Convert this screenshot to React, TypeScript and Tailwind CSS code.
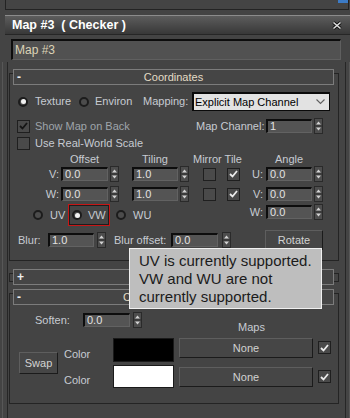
import React from 'react';

const font = "font-['Liberation_Sans',Arial,sans-serif]";

function Spinner() {
  return (
    <svg width="9" height="16" viewBox="0 0 9 16" className="shrink-0">
      <rect x="0.5" y="0.5" width="8" height="15" fill="#4d4d4d" stroke="#2a2a2a" />
      <path d="M2 6.5 L4.5 3.5 L7 6.5Z" fill="#d2d2d2" />
      <line x1="1" y1="8" x2="8" y2="8" stroke="#2a2a2a" />
      <path d="M2 9.5 L4.5 12.5 L7 9.5Z" fill="#d2d2d2" />
    </svg>
  );
}

function NumField({ value, className }: { value: string; className: string }) {
  return (
    <div
      className={`h-[14px] shrink-0 bg-[#545454] border-t-2 border-l-2 border-t-[#0d0d0d] border-l-[#0d0d0d] border-b border-r border-b-[#626262] border-r-[#626262] pl-[2px] flex items-center text-[11px] leading-none text-[#e2e2e2] ${className}`}
    >
      {value}
    </div>
  );
}

function Check({ checked, dim }: { checked?: boolean; dim?: boolean }) {
  return (
    <div className="w-[13px] h-[13px] shrink-0 border border-[#1f1f1f] bg-[#4a4a4a] flex items-center justify-center">
      {checked && (
        <svg width="9" height="8" viewBox="0 0 9 8">
          <path d="M1 4 L3.5 6.5 L8 1" fill="none" stroke={dim ? '#151515' : '#ececec'} strokeWidth="1.8" />
        </svg>
      )}
    </div>
  );
}

function Radio({ on }: { on?: boolean }) {
  return (
    <div className="w-[10px] h-[10px] shrink-0 rounded-full border-2 border-[#1c1c1c] bg-[#4c4c4c] flex items-center justify-center">
      {on && <div className="w-[5px] h-[5px] rounded-full bg-[#f2f2f2]" />}
    </div>
  );
}

function Header({ sign, title }: { sign: string; title?: string }) {
  return (
    <div className="-mt-[5px] ml-[3px] w-[321px] h-[16px] shrink-0 border border-[#7c7c7c] bg-[#454545] grid grid-cols-[20px_1fr_20px] items-center">
      <span className="pl-[3px] text-[12px] font-bold text-[#eeeeee] leading-none">{sign}</span>
      <span className="text-center text-[11px] text-[#e3dcc6] leading-none">{title}</span>
      <span />
    </div>
  );
}

function Btn({ label, className }: { label: string; className: string }) {
  return (
    <div
      className={`shrink-0 bg-[#464646] border-t border-l border-t-[#5e5e5e] border-l-[#5e5e5e] border-b border-r border-b-[#1b1b1b] border-r-[#1b1b1b] flex items-center justify-center text-[11px] text-[#d2d2d2] ${className}`}
    >
      {label}
    </div>
  );
}

export default function App() {
  return (
    <div className={`relative w-[350px] h-[418px] overflow-hidden bg-[#444444] ${font} text-[11px] text-[#c7cbd2]`}>
      {/* top strip */}
      <div className="ml-[5px] w-[344px] h-[10px] border-l border-r border-b border-[#232323] flex justify-end">
        <div className="w-[10px] h-[3px] bg-[#3c7bc6]" />
      </div>

      {/* title bar */}
      <div className="mt-[5px] ml-[5px] h-[20px] border-t border-t-[#8c8c8c] border-b border-b-[#262626] bg-linear-to-b from-[#5d5d5d] to-[#383838] flex items-center justify-between pl-[7px] pr-[8px]">
        <span className="text-[12.5px] font-bold text-white whitespace-pre leading-none">Map #3  ( Checker )</span>
        <svg width="10" height="9" viewBox="0 0 10 9">
          <path d="M1.5 1.5 L8.5 7.5 M8.5 1.5 L1.5 7.5" stroke="#111" strokeWidth="3.4" />
          <path d="M1.5 1.5 L8.5 7.5 M8.5 1.5 L1.5 7.5" stroke="#dedede" strokeWidth="1.6" />
        </svg>
      </div>

      {/* name field */}
      <div className="mt-[4px] ml-[11px] w-[330px] h-[21px] bg-[#515151] border-t-2 border-l-2 border-t-[#0c0c0c] border-l-[#0c0c0c] border-b border-r border-b-[#5f5f5f] border-r-[#5f5f5f] pl-[2px] flex items-center text-[12px] text-[#dcd3b6]">
        Map #3
      </div>

      {/* rollouts */}
      <div className="mt-[2px] ml-[2px] w-[348px] h-[356px] border-l border-r border-[#575757]">
        <div className="ml-[4px] w-[339px] h-full border-l border-r border-[#262626] flex flex-col">
          {/* Coordinates */}
          <div className="mt-[11px] ml-[1px] w-[330px] border border-[#242424] pb-[10px] flex flex-col">
            <Header sign="-" title="Coordinates" />

            <div className="mt-[7px] h-[19px] flex items-center">
              <div className="ml-[8px]"><Radio on /></div>
              <span className="ml-[7px] w-[44px]">Texture</span>
              <Radio />
              <span className="ml-[6px] w-[48px]">Environ</span>
              <span className="w-[49px]">Mapping:</span>
              <div className="w-[138px] h-[19px] bg-[#e2e2e2] border-t-2 border-l-2 border-[#0a0a0a] border-r border-b flex items-center justify-between pl-[1px] pr-[4px] text-[11px] text-black">
                <span>Explicit Map Channel</span>
                <svg width="9" height="6" viewBox="0 0 9 6">
                  <path d="M0.5 0.5 L4.5 4.5 L8.5 0.5" fill="none" stroke="#606060" strokeWidth="1.1" />
                </svg>
              </div>
            </div>

            <div className="mt-[7px] h-[16px] flex items-center">
              <div className="ml-[7px]"><Check checked dim /></div>
              <span className="ml-[5px] w-[161px] text-[#9fa4ab]">Show Map on Back</span>
              <span className="w-[70px]">Map Channel:</span>
              <NumField value="1" className="w-[46px]" />
              <div className="ml-[2px]"><Spinner /></div>
            </div>

            <div className="mt-[2px] h-[14px] flex items-center">
              <div className="ml-[7px]"><Check /></div>
              <span className="ml-[5px]">Use Real-World Scale</span>
            </div>

            <div className="mt-[2px] h-[14px] flex items-center">
              <span className="w-[51px]" />
              <span className="w-[47px] text-center">Offset</span>
              <span className="ml-[24px] w-[46px] text-center">Tiling</span>
              <span className="ml-[15px] w-[47px] text-center whitespace-nowrap">Mirror Tile</span>
              <span className="ml-[26px] w-[46px] text-center">Angle</span>
            </div>

            <div className="h-[16px] flex items-center">
              <span className="w-[51px] text-right pr-[2px]">V:</span>
              <NumField value="0.0" className="w-[47px]" />
              <div className="ml-[2px]"><Spinner /></div>
              <NumField value="1.0" className="ml-[13px] w-[46px]" />
              <div className="ml-[2px]"><Spinner /></div>
              <div className="ml-[14px]"><Check /></div>
              <div className="ml-[11px]"><Check checked /></div>
              <span className="w-[26px] text-right pr-[3px]">U:</span>
              <NumField value="0.0" className="w-[46px]" />
              <div className="ml-[2px]"><Spinner /></div>
            </div>

            <div className="mt-[4px] h-[16px] flex items-center">
              <span className="w-[51px] text-right pr-[2px]">W:</span>
              <NumField value="0.0" className="w-[47px]" />
              <div className="ml-[2px]"><Spinner /></div>
              <NumField value="1.0" className="ml-[13px] w-[46px]" />
              <div className="ml-[2px]"><Spinner /></div>
              <div className="ml-[14px]"><Check /></div>
              <div className="ml-[11px]"><Check checked /></div>
              <span className="w-[26px] text-right pr-[3px]">V:</span>
              <NumField value="0.0" className="w-[46px]" />
              <div className="ml-[2px]"><Spinner /></div>
            </div>

            <div className="mt-[2px] h-[22px] flex items-start">
              <div className="w-[230px] h-[22px] flex items-center">
                <div className="ml-[23px]"><Radio /></div>
                <span className="ml-[7px] w-[18px]">UV</span>
                <div className="w-[42px] h-[22px] border border-[#c81616] shadow-[inset_0_0_0_1px_#1d1d1d] flex items-center">
                  <div className="ml-[3px]"><Radio on /></div>
                  <span className="ml-[6px]">VW</span>
                </div>
                <div className="ml-[6px]"><Radio /></div>
                <span className="ml-[7px]">WU</span>
              </div>
              <div className="h-[16px] flex items-center">
                <span className="w-[26px] text-right pr-[3px]">W:</span>
                <NumField value="0.0" className="w-[46px]" />
                <div className="ml-[2px]"><Spinner /></div>
              </div>
            </div>

            <div className="mt-[4px] h-[20px] flex items-center">
              <span className="ml-[8px] w-[30px]">Blur:</span>
              <NumField value="1.0" className="w-[46px]" />
              <div className="ml-[3px]"><Spinner /></div>
              <span className="ml-[8px] w-[57px] whitespace-nowrap">Blur offset:</span>
              <NumField value="0.0" className="w-[47px]" />
              <div className="ml-[4px]"><Spinner /></div>
              <Btn label="Rotate" className="ml-[34px] w-[58px] h-[20px]" />
            </div>
          </div>

          {/* collapsed rollout */}
          <div className="mt-[12px] ml-[1px] w-[330px] h-[9px] border border-[#242424] flex flex-col">
            <Header sign="+" />
          </div>

          {/* Checker Parameters */}
          <div className="mt-[11px] ml-[1px] w-[330px] border border-[#242424] pb-[15px] flex flex-col">
            <Header sign="-" title="Checker Parameters" />

            <div className="mt-[7px] h-[22px] flex items-start">
              <span className="ml-[25px] w-[48px] h-[16px] flex items-center">Soften:</span>
              <NumField value="0.0" className="mt-[1px] w-[47px]" />
              <div className="ml-[3px]"><Spinner /></div>
              <span className="ml-[96px] mt-[8px] h-[14px] flex items-center">Maps</span>
            </div>

            <div className="mt-[4px] flex items-center">
              <Btn label="Swap" className="ml-[9px] w-[39px] h-[22px]" />
              <div className="ml-[6px] flex flex-col">
                <div className="h-[24px] flex items-start">
                  <span className="w-[49px] mt-[9px] h-[14px] flex items-center">Color</span>
                  <div className="w-[61px] h-[24px] bg-black border border-[#1a1a1a]" />
                  <Btn label="None" className="ml-[5px] w-[134px] h-[20px]" />
                  <div className="ml-[5px] mt-[3px]"><Check checked /></div>
                </div>
                <div className="mt-[3px] h-[23px] flex items-start">
                  <span className="w-[49px] mt-[8px] h-[14px] flex items-center">Color</span>
                  <div className="w-[61px] h-[23px] bg-white border border-[#1a1a1a]" />
                  <Btn label="None" className="ml-[5px] mt-[2px] w-[134px] h-[20px]" />
                  <div className="ml-[5px] mt-[5px]"><Check checked /></div>
                </div>
              </div>
            </div>
          </div>
        </div>
      </div>

      {/* tooltip */}
      <div className="absolute left-[129px] top-[248px] w-[193px] h-[61px] bg-[#bebebe] border border-[#f0f0f0] pl-[9px] pt-[3px] text-[15px] leading-[18px] text-[#1b1b1b]">
        UV is currently supported.
        <br />
        VW and WU are not
        <br />
        currently supported.
      </div>
    </div>
  );
}
